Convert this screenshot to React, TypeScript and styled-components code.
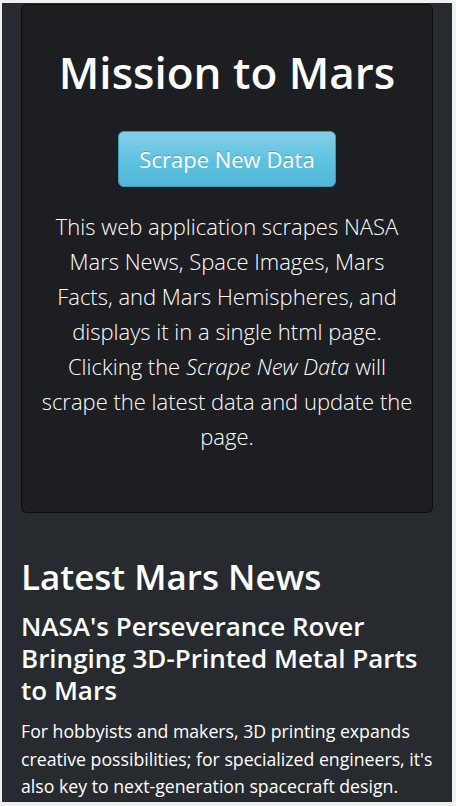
import React from "react";
import styled, { createGlobalStyle } from "styled-components";

const GlobalStyle = createGlobalStyle`
  html, body {
    margin: 0;
    padding: 0;
  }
  body {
    background: #f0f0f0;
    padding: 3px 4px 4px 2px;
    font-family: "Open Sans", "Noto Sans", sans-serif;
    color: #ffffff;
    -webkit-font-smoothing: antialiased;
  }
  * { box-sizing: border-box; }
`;

const Page = styled.div`
  background: #272b30;
  height: 799px;
  overflow: hidden;
  padding: 1px 19px 0;
`;

const Jumbotron = styled.section`
  height: 509px;
  background: #1c1e22;
  border: 1px solid rgba(0, 0, 0, 0.6);
  border-radius: 6px;
  padding: 38px 12px 0;
  display: flex;
  flex-direction: column;
  align-items: center;
  text-align: center;
`;

const Title = styled.h1`
  margin: 0;
  font-size: 44px;
  line-height: 58px;
  font-weight: 600;
  color: #ffffff;
`;

const ScrapeButton = styled.button`
  margin-top: 30px;
  height: 56px;
  padding: 0 20px;
  font-family: inherit;
  font-size: 22px;
  font-weight: 400;
  color: #ffffff;
  text-shadow: 0 -1px 0 rgba(0, 0, 0, 0.2);
  background-image: linear-gradient(#84cfe8, #5bc0de 60%, #55b6d7);
  border: 1px solid #3f9bbb;
  border-radius: 6px;
  cursor: pointer;
`;

const Lead = styled.p`
  margin: 22px 0 0;
  font-size: 22px;
  line-height: 35px;
  font-weight: 300;
  color: #ffffff;
`;

const NewsSection = styled.section`
  padding: 41px 0 0;
`;

const SectionTitle = styled.h2`
  margin: 0;
  font-size: 35px;
  line-height: 46px;
  font-weight: 600;
  color: #ffffff;
`;

const NewsTitle = styled.h3`
  margin: 10px 0 0;
  font-size: 26px;
  line-height: 32px;
  font-weight: 600;
  color: #ffffff;
`;

const NewsTeaser = styled.p`
  margin: 12px 0 0;
  font-size: 17.7px;
  line-height: 27.5px;
  font-weight: 400;
  color: #ffffff;
`;

export default function App() {
  return (
    <>
      <GlobalStyle />
      <Page>
        <Jumbotron>
          <Title>Mission to Mars</Title>
          <ScrapeButton type="button">Scrape New Data</ScrapeButton>
          <Lead>
            This web application scrapes NASA
            <br />
            Mars News, Space Images, Mars
            <br />
            Facts, and Mars Hemispheres, and
            <br />
            displays it in a single html page.
            <br />
            Clicking the <em>Scrape New Data</em> will
            <br />
            scrape the latest data and update the
            <br />
            page.
          </Lead>
        </Jumbotron>
        <NewsSection>
          <SectionTitle>Latest Mars News</SectionTitle>
          <NewsTitle>
            NASA's Perseverance Rover Bringing 3D-Printed Metal Parts to Mars
          </NewsTitle>
          <NewsTeaser>
            For hobbyists and makers, 3D printing expands creative
            possibilities; for specialized engineers, it's also key to
            next-generation spacecraft design.
          </NewsTeaser>
        </NewsSection>
      </Page>
    </>
  );
}
